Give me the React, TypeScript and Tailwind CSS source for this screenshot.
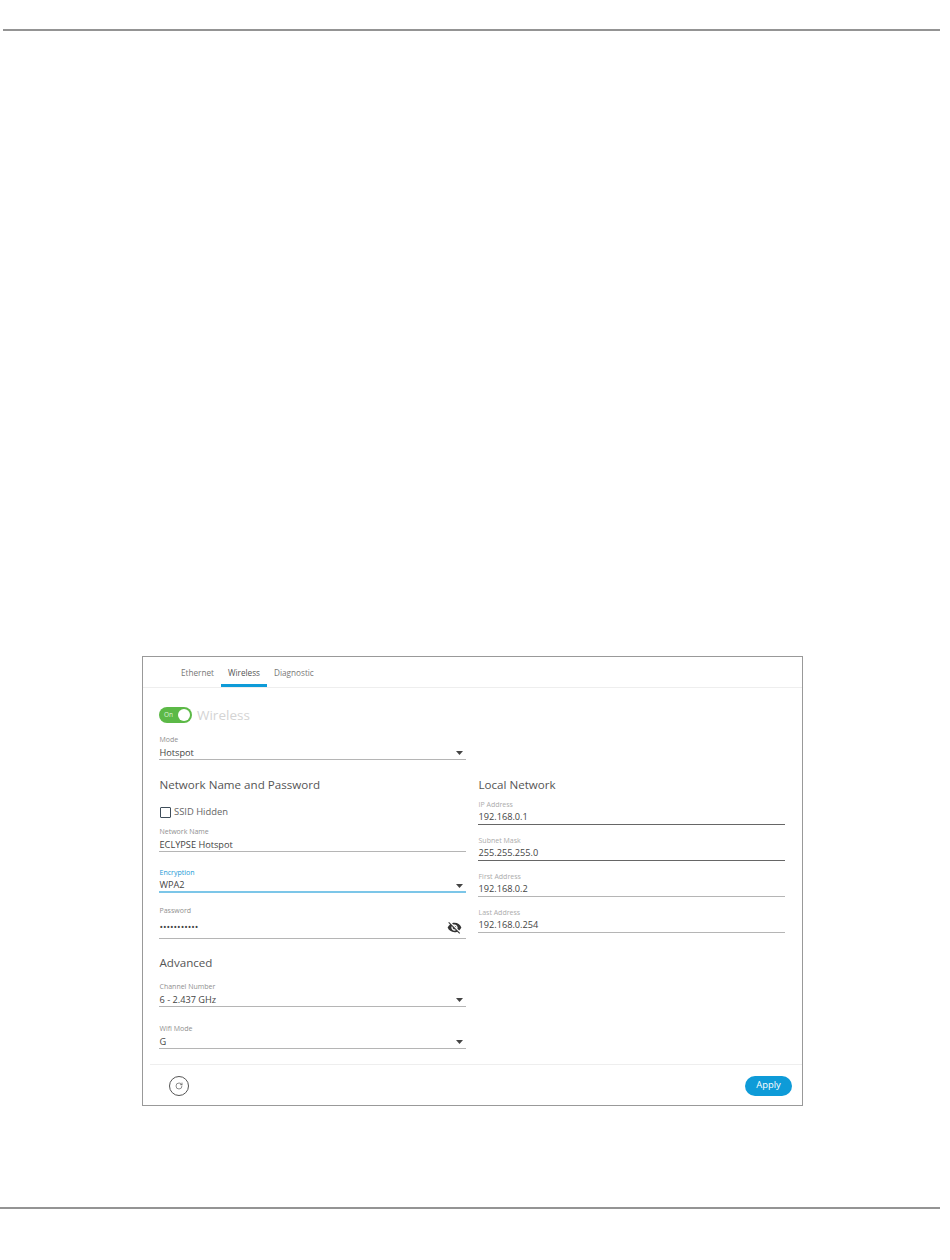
import React from "react";
import { RotateCw } from "lucide-react";
import { MdVisibilityOff } from "react-icons/md";

const font = { fontFamily: '"Open Sans", sans-serif' };

interface FieldProps {
  label: string;
  value: string;
  select?: boolean;
  focused?: boolean;
  dark?: boolean;
  muted?: boolean;
  tight?: boolean;
  className?: string;
}

const Caret = () => (
  <svg width="7" height="4" viewBox="0 0 7 4" className="absolute right-[3px] top-[6px]">
    <path d="M0 0h7L3.5 4z" fill="#444" />
  </svg>
);

const Field: React.FC<FieldProps> = ({ label, value, select, focused, dark, muted, tight, className }) => {
  let line = "border-b border-[#b5b5b5]";
  if (dark) line = "border-b border-[#666]";
  if (focused) line = "border-b-2 border-[#7cc6e8]";
  let labelColor = "text-[#8f8f8f]";
  if (muted) labelColor = "text-[#ababab]";
  if (focused) labelColor = "text-[#1a9ad6]";
  return (
    <div className={className}>
      <div className={`pl-[0.5px] text-[7px] leading-[10px] ${labelColor}`}>{label}</div>
      <div className={`relative h-[15px] pl-[0.5px] text-[9.2px] text-[#444] ${tight ? "leading-[13px]" : "leading-[15px]"} ${line}`}>
        {value}
        {select && <Caret />}
      </div>
    </div>
  );
};

export default function App() {
  return (
    <div className="flex h-[1260px] w-[950px] flex-col bg-white pt-[29px]" style={font}>
      {/* top rule */}
      <div className="ml-[3px] mr-[10px] h-[2px] bg-[#949494]" />

      {/* settings card */}
      <div className="ml-[142px] mt-[625px] flex h-[450px] w-[661px] flex-col border border-[#999]">
        {/* tabs */}
        <div className="flex h-[31px] border-b border-[#eee] pl-[31px] text-[8.2px] text-[#777]">
          <div className="flex items-center px-[7px] pt-[2px]">Ethernet</div>
          <div className="flex items-center border-b-[3px] border-[#0e9bd8] px-[7px] pt-[5px] text-[#555]">Wireless</div>
          <div className="flex items-center px-[7px] pt-[2px]">Diagnostic</div>
        </div>

        <div className="flex-1 pl-[16px] pt-[19px]">
          {/* wireless toggle */}
          <div className="flex h-[16px] items-center">
            <div className="flex h-[16px] w-[33px] items-center justify-between rounded-full bg-[#5cb947] pl-[5px] pr-[2px]">
              <span className="text-[6.5px] leading-none text-[#dff2d9]">On</span>
              <span className="h-[12px] w-[12px] rounded-full bg-white" />
            </div>
            <span className="ml-[5px] text-[13.5px] text-[#d4d4d4]">Wireless</span>
          </div>

          <Field label="Mode" value="Hotspot" select className="mt-[12px] w-[307px]" />

          <div className="mt-[16px] flex gap-[12px]">
            {/* left column */}
            <div className="w-[307px]">
              <h2 className="pl-[0.5px] text-[11.6px] font-normal leading-[18px] text-[#555]">Network Name and Password</h2>
              <label className="mt-[12px] flex h-[12px] items-center text-[9.4px] text-[#666]">
                <span className="ml-[1px] h-[11px] w-[11px] rounded-[1px] border border-[#3f4d5a]" />
                <span className="ml-[3px]">SSID Hidden</span>
              </label>
              <Field label="Network Name" value="ECLYPSE Hotspot" className="mt-[9px]" />
              <Field label="Encryption" value="WPA2" select focused tight className="mt-[16px]" />
              <div className="mt-[13px]">
                <div className="pl-[0.5px] text-[7px] leading-[10px] text-[#8f8f8f]">Password</div>
                <div className="relative flex h-[23px] items-center border-b border-[#b5b5b5] pl-[0.5px] text-[#444]">
                  <span className="text-[9.5px] leading-none tracking-[-0.05px]">•••••••••••</span>
                  <MdVisibilityOff size={15} className="absolute right-[4px] top-[4px] text-[#333]" />
                </div>
              </div>
              <h2 className="mt-[15px] pl-[0.5px] text-[11.6px] font-normal leading-[18px] text-[#555]">Advanced</h2>
              <Field label="Channel Number" value="6 - 2.437 GHz" select className="mt-[10px]" />
              <Field label="Wifi Mode" value="G" select className="mt-[17px]" />
            </div>

            {/* right column */}
            <div className="w-[307px]">
              <h2 className="pl-[0.5px] text-[11.6px] font-normal leading-[18px] text-[#555]">Local Network</h2>
              <Field label="IP Address" value="192.168.0.1" dark muted tight className="mt-[6px]" />
              <Field label="Subnet Mask" value="255.255.255.0" dark muted tight className="mt-[11px]" />
              <Field label="First Address" value="192.168.0.2" muted tight className="mt-[11px]" />
              <Field label="Last Address" value="192.168.0.254" muted tight className="mt-[11px]" />
            </div>
          </div>
        </div>

        {/* footer */}
        <div className="ml-[7px] flex h-[41px] items-center justify-between border-t border-[#eee] pl-[19px] pr-[10px] pt-[1px]">
          <button className="flex h-[20px] w-[20px] items-center justify-center rounded-full border border-[#555] text-[#555]">
            <RotateCw size={8} strokeWidth={2} />
          </button>
          <button className="flex h-[20px] w-[47px] items-center justify-center rounded-full bg-[#0e9bd8] text-[9.4px] text-white">
            Apply
          </button>
        </div>
      </div>

      {/* bottom rule */}
      <div className="mr-[10px] mt-[101px] h-[2px] bg-[#949494]" />
    </div>
  );
}
